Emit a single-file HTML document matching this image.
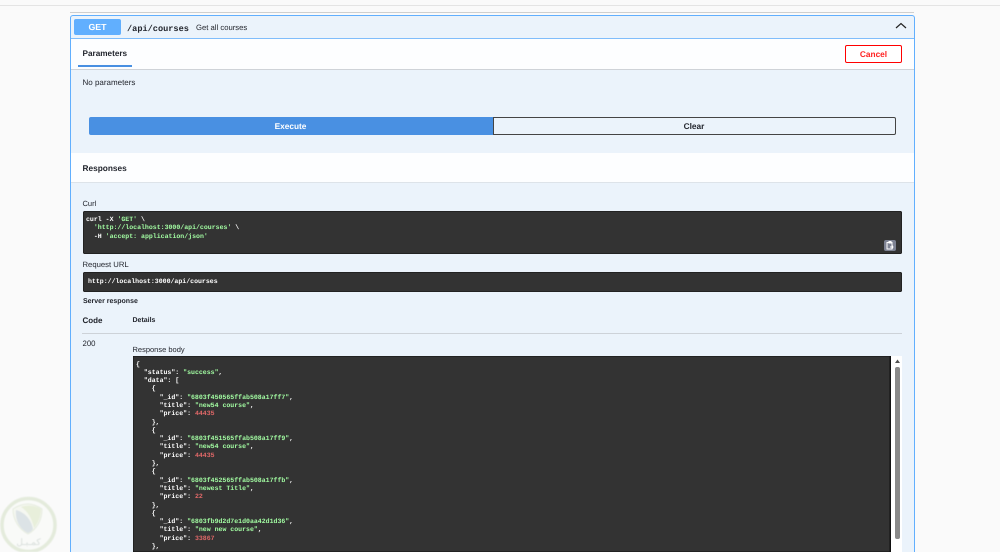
<!DOCTYPE html>
<html><head><meta charset="utf-8">
<style>
html,body{margin:0;padding:0;width:1000px;height:552px;overflow:hidden;background:#fafafa}
body{position:relative;font-family:"Liberation Sans",sans-serif;color:#23262e;text-rendering:geometricPrecision}
.a{position:absolute}
.t{position:absolute;white-space:pre;line-height:10px;color:#23262e;filter:blur(.25px)}
.b{font-weight:700}
.m{font-family:"Liberation Mono",monospace}
pre{position:absolute;margin:0;font:700 6.55px/8.3px "Liberation Mono",monospace;color:#fff;white-space:pre;filter:blur(.25px)}
.s{color:#a2fca2}.n{color:#e06868}
</style></head><body>
<div class="a" style="left:0;top:5px;width:1000px;height:1px;background:#e4e4e4"></div>
<div class="a" style="left:70px;top:12px;width:844px;height:1px;background:#cfcfcf"></div>

<div class="a" style="left:70px;top:15px;width:843px;height:537px;border:1px solid #61affe;border-bottom:0;border-radius:3px 3px 0 0;background:#ebf3fb;box-sizing:content-box"></div>
<div class="a" style="left:71px;top:38px;width:843px;height:1px;background:#80bdfb"></div>
<div class="a" style="left:71px;top:39px;width:843px;height:30px;background:#fdfeff"></div>
<div class="a" style="left:71px;top:69px;width:843px;height:1px;background:#cfd3d8"></div>
<div class="a" style="left:71px;top:153px;width:843px;height:29px;background:#fdfeff"></div>
<div class="a" style="left:71px;top:182px;width:843px;height:1px;background:#dde3e9"></div>

<div class="a" style="left:74px;top:19px;width:47px;height:16px;background:#61affe;border-radius:2px"></div>
<div class="t b" style="left:74px;top:22px;width:47px;text-align:center;color:#fff;font-size:8.8px">GET</div>
<div class="t b m" style="left:127px;top:23.5px;font-size:8.6px">/api/courses</div>
<div class="t" style="left:196px;top:23px;font-size:7.7px">Get all courses</div>
<svg class="a" style="left:895px;top:21px" width="12" height="9" viewBox="0 0 12 9"><path d="M1 7 L6 2.5 L11 7" fill="none" stroke="#222" stroke-width="1.2"/></svg>

<div class="t b" style="left:82.5px;top:49px;font-size:8.2px">Parameters</div>
<div class="a" style="left:78px;top:65px;width:54px;height:2px;background:#4990e2"></div>
<div class="a" style="left:845px;top:45px;width:55px;height:16px;border:1px solid #f00;border-radius:2px;background:#fff"></div>
<div class="t b" style="left:845px;top:49px;width:57px;text-align:center;font-size:8.3px;color:#f22">Cancel</div>

<div class="t" style="left:82.5px;top:78px;font-size:8px">No parameters</div>

<div class="a" style="left:89px;top:117px;width:403.5px;height:17.5px;background:#4990e2;border-radius:2px 0 0 2px"></div>
<div class="t b" style="left:89px;top:121px;width:403px;text-align:center;font-size:8.3px;color:#fff">Execute</div>
<div class="a" style="left:492.5px;top:117px;width:401.5px;height:15.5px;border:1px solid #444;border-radius:0 2px 2px 0;background:#ebf3fb"></div>
<div class="t b" style="left:492.5px;top:121px;width:403px;text-align:center;font-size:8.3px">Clear</div>

<div class="t b" style="left:82.5px;top:162.5px;font-size:8.3px">Responses</div>

<div class="t" style="left:82.5px;top:199px;font-size:7.5px">Curl</div>
<div class="a" style="left:83px;top:211px;width:819px;height:43px;background:#333;border-radius:2px;box-shadow:inset 0 0 0 .5px #111"></div>
<pre style="left:86px;top:216px">curl -X <span class="s">'GET'</span> \
  <span class="s">'http://localhost:3000/api/courses'</span> \
  -H <span class="s">'accept: application/json'</span></pre>
<div class="a" style="left:884px;top:240px;width:12px;height:11px;background:#7d8293;border-radius:2px"></div>
<svg class="a" style="left:884px;top:240px" width="12" height="11" viewBox="0 0 12 11"><path d="M3 2.5h5v6.5H3zM5 1.5h2v1.5H5zM6 7h3.500M8.500 5.500v3" fill="none" stroke="#fff" stroke-width="1"/></svg>

<div class="t" style="left:82.5px;top:259.5px;font-size:7.7px">Request URL</div>
<div class="a" style="left:83px;top:272px;width:819px;height:20px;background:#333;border-radius:2px;box-shadow:inset 0 0 0 .5px #111"></div>
<pre style="left:88px;top:278px">http://localhost:3000/api/courses</pre>

<div class="t b" style="left:83px;top:297px;font-size:7px">Server response</div>
<div class="t b" style="left:82.5px;top:316px;font-size:8px">Code</div>
<div class="t b" style="left:132.5px;top:316px;font-size:7px">Details</div>
<div class="a" style="left:82px;top:333px;width:820px;height:1px;background:#cdd2d8"></div>
<div class="t" style="left:82.5px;top:339px;font-size:7.8px">200</div>
<div class="t" style="left:132.5px;top:344.5px;font-size:7.5px">Response body</div>

<div class="a" style="left:133px;top:356px;width:757px;height:196px;background:#333;box-shadow:inset 0 0 0 .5px #111"></div>
<div class="a" style="left:890px;top:356px;width:12px;height:196px;background:#fff"></div>
<div class="a" style="left:889.5px;top:356px;width:1px;height:196px;background:#111"></div>
<div class="a" style="left:895px;top:367px;width:5px;height:172px;background:#8a8a8a;border-radius:2px"></div>
<svg class="a" style="left:894px;top:359px" width="7" height="5" viewBox="0 0 7 5"><path d="M3.500 .5L6 4H1z" fill="#505050"/></svg>

<pre style="left:136px;top:360.5px">{
  "status": <span class="s">"success"</span>,
  "data": [
    {
      "_id": <span class="s">"6803f450565ffab508a17ff7"</span>,
      "title": <span class="s">"new54 course"</span>,
      "price": <span class="n">44435</span>
    },
    {
      "_id": <span class="s">"6803f451565ffab508a17ff9"</span>,
      "title": <span class="s">"new54 course"</span>,
      "price": <span class="n">44435</span>
    },
    {
      "_id": <span class="s">"6803f452565ffab508a17ffb"</span>,
      "title": <span class="s">"newest Title"</span>,
      "price": <span class="n">22</span>
    },
    {
      "_id": <span class="s">"6803fb9d2d7e1d0aa42d1d36"</span>,
      "title": <span class="s">"new new course"</span>,
      "price": <span class="n">33867</span>
    },</pre>

<svg class="a" style="left:0;top:496px;filter:blur(.5px)" width="58" height="56" viewBox="0 0 58 56">
<circle cx="28.5" cy="29" r="26.5" fill="#f9faf8" stroke="#e4ebdc" stroke-width="3.5"/>
<path d="M13 13 C19 9 25 8 28 8 C32 8 38 10 42 13 C42 24 37 33 28 38 C19 33 13 24 13 13Z" fill="#f5f7f1" stroke="#e6ecdf" stroke-width="1"/>
<path d="M16 14 C15 25 20 33 28 37 C31 35.5 32 34.500 33 33 C31 24 26 17 16 14Z" fill="#dce3e6"/>
<path d="M21 11 C26 9 34 9 41 13 C41 21 38 27 34 32 C32 23 28 15 21 11Z" fill="#e8efdb"/>
<text x="28.5" y="49" font-size="9" fill="#d8dedb" text-anchor="middle" font-family="'DejaVu Sans',sans-serif">كمـبـل</text>
</svg>
</body></html>
